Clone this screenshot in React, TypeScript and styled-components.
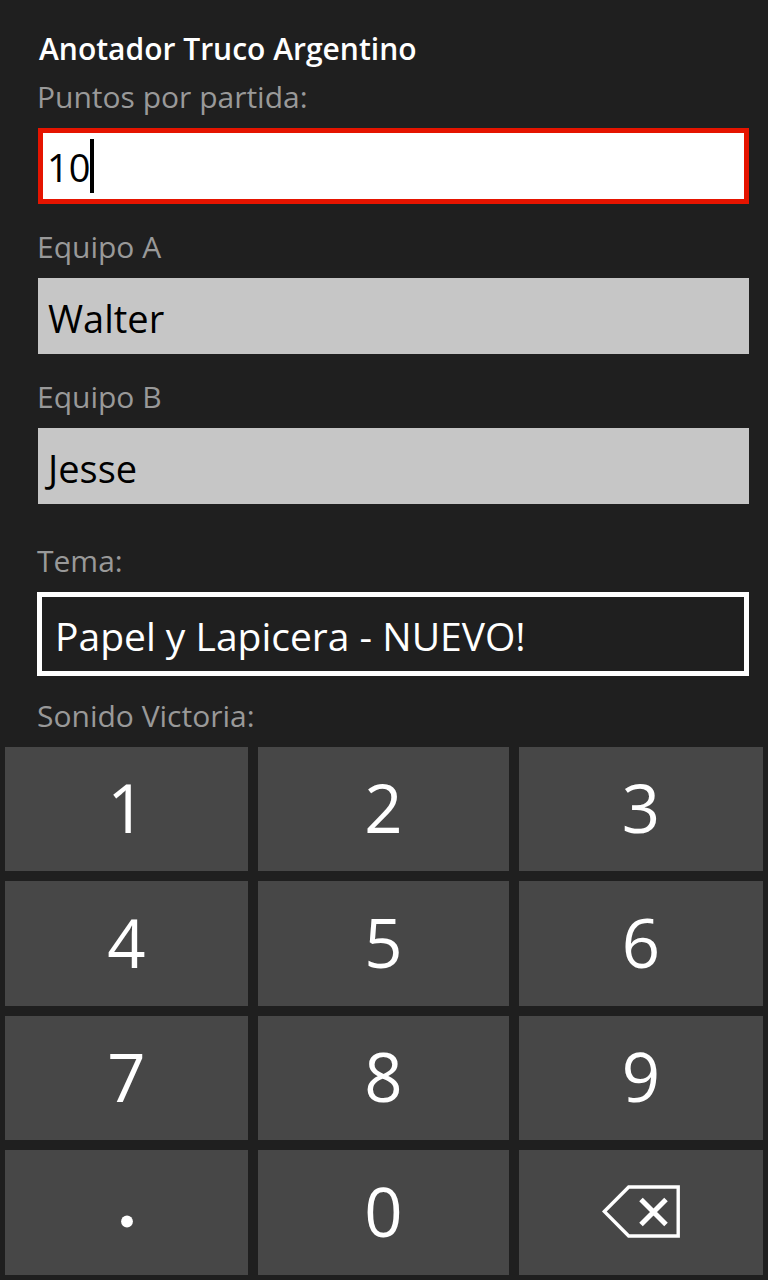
import React, { useState } from "react";
import styled, { createGlobalStyle } from "styled-components";

const GlobalStyle = createGlobalStyle`
  *, *::before, *::after { box-sizing: border-box; }
  body {
    margin: 0;
    background: #1f1f1f;
    color: #ffffff;
    font-family: "Open Sans", "Noto Sans", sans-serif;
  }
  input, select, button { font-family: inherit; }
`;

const Page = styled.main`
  min-height: 100vh;
  display: flex;
  flex-direction: column;
`;

const Settings = styled.form`
  display: flex;
  flex-direction: column;
  padding: 29px 19px 11px 37px;
`;

const Title = styled.h1`
  margin: 0 0 8px;
  padding-left: 2px;
  font-size: 30px;
  line-height: 40px;
  font-weight: 600;
`;

const Fields = styled.div`
  display: flex;
  flex-direction: column;
  gap: 23px;
  margin-bottom: 37px;
`;

const Field = styled.div`
  display: flex;
  flex-direction: column;
  gap: 11px;
`;

const Label = styled.label`
  font-size: 30px;
  line-height: 40px;
  color: #999999;
`;

const TextBox = styled.div<{ $focused?: boolean }>`
  display: flex;
  align-items: center;
  height: 76px;
  margin-left: 1px;
  border: 5px solid ${(p) => (p.$focused ? "#e51400" : "#c6c6c6")};
  background: ${(p) => (p.$focused ? "#ffffff" : "#c6c6c6")};
`;

const TextInput = styled.input<{ $fit?: boolean }>`
  ${(p) =>
    p.$fit
      ? "field-sizing: content; padding: 2px 0 0 4px;"
      : "flex: 1; padding: 3px 0 0; text-indent: 5px;"}
  min-width: 0;
  height: 60px;
  border: 0;
  outline: 0;
  background: transparent;
  color: #000000;
  caret-color: transparent;
  font-size: 38px;
`;

const Caret = styled.span`
  width: 4px;
  height: 54px;
  background: #000000;
`;

const Picker = styled.select`
  appearance: none;
  width: 100%;
  height: 84px;
  padding: 3px 13px 0;
  border: 5px solid #ffffff;
  border-radius: 0;
  outline: 0;
  background: #1f1f1f;
  color: #ffffff;
  font-size: 39px;
`;

const SoundLabel = styled.div`
  margin-top: 20px;
  font-size: 30px;
  line-height: 40px;
  color: #999999;
`;

const Keypad = styled.div`
  flex: 1;
  display: grid;
  grid-template-columns: 243fr 251fr 244fr;
  grid-template-rows: 124fr 125fr 124fr 125fr;
  gap: 10px;
  padding: 0 5px 5px;
`;

const Key = styled.button`
  display: flex;
  align-items: center;
  justify-content: center;
  min-height: 96px;
  padding: 0 0 4px;
  border: 0;
  background: #474747;
  color: #ffffff;
  font-size: 67px;
  line-height: 80px;
`;

const IconKey = styled(Key)`
  padding: 0 0 2px;
`;

const DIGITS = ["1", "2", "3", "4", "5", "6", "7", "8", "9"];

const PointIcon = () => (
  <svg width="12" height="54" viewBox="0 0 12 54" aria-hidden="true">
    <circle cx="6" cy="36.5" r="5.9" fill="#ffffff" />
  </svg>
);

const BackspaceIcon = () => (
  <svg width="78" height="54" viewBox="0 0 78 54" fill="none" stroke="#ffffff" aria-hidden="true">
    <path d="M2.3 26.5 L26.7 2 H76.2 V51 H26.7 Z" strokeWidth="3.4" />
    <path d="M39 14.5 L64 39.5 M64 14.5 L39 39.5" strokeWidth="5" />
  </svg>
);

export default function App() {
  const [points, setPoints] = useState("10");
  const [teamA, setTeamA] = useState("Walter");
  const [teamB, setTeamB] = useState("Jesse");

  const type = (character: string) => setPoints((value) => value + character);

  return (
    <>
      <GlobalStyle />
      <Page>
        <Settings onSubmit={(e) => e.preventDefault()}>
          <Title>Anotador Truco Argentino</Title>
          <Fields>
            <Field>
              <Label htmlFor="points">Puntos por partida:</Label>
              <TextBox $focused>
                <TextInput
                  id="points"
                  $fit
                  inputMode="decimal"
                  value={points}
                  onChange={(e) => setPoints(e.target.value)}
                />
                <Caret />
              </TextBox>
            </Field>
            <Field>
              <Label htmlFor="team-a">Equipo A</Label>
              <TextBox>
                <TextInput id="team-a" value={teamA} onChange={(e) => setTeamA(e.target.value)} />
              </TextBox>
            </Field>
            <Field>
              <Label htmlFor="team-b">Equipo B</Label>
              <TextBox>
                <TextInput id="team-b" value={teamB} onChange={(e) => setTeamB(e.target.value)} />
              </TextBox>
            </Field>
          </Fields>
          <Field>
            <Label htmlFor="theme">Tema:</Label>
            <Picker id="theme">
              <option>Papel y Lapicera - NUEVO!</option>
            </Picker>
          </Field>
          <SoundLabel>Sonido Victoria:</SoundLabel>
        </Settings>
        <Keypad>
          {DIGITS.map((digit) => (
            <Key key={digit} type="button" onClick={() => type(digit)}>
              {digit}
            </Key>
          ))}
          <IconKey type="button" aria-label="Punto" onClick={() => type(".")}>
            <PointIcon />
          </IconKey>
          <Key type="button" onClick={() => type("0")}>
            0
          </Key>
          <IconKey
            type="button"
            aria-label="Borrar"
            onClick={() => setPoints((value) => value.slice(0, -1))}
          >
            <BackspaceIcon />
          </IconKey>
        </Keypad>
      </Page>
    </>
  );
}
